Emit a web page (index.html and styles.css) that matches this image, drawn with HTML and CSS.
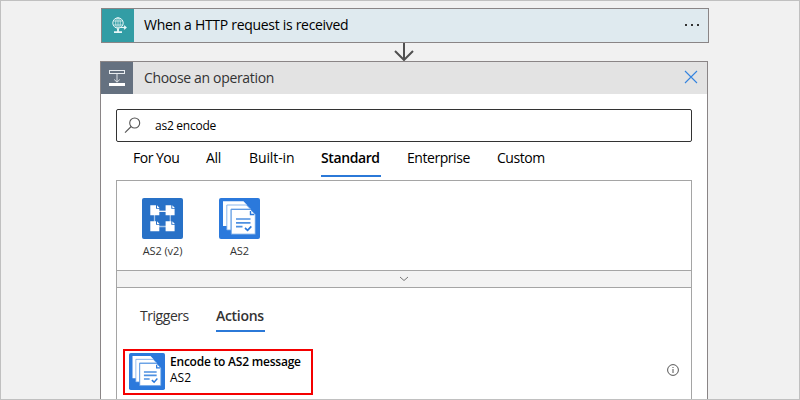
FILE: index.html
```html
<!DOCTYPE html>
<html lang="en">
<head>
<meta charset="utf-8">
<title>Choose an operation</title>
<link rel="stylesheet" href="styles.css">
</head>
<body>
<svg class="defs" width="0" height="0" aria-hidden="true">
  <symbol id="as2" viewBox="0 0 41 41" preserveAspectRatio="none">
    <rect width="41" height="41" rx="2" fill="#2b79dc"/>
    <path d="M4 3.3H24.5L28 7H8V28H4Z" fill="#fff"/>
    <path d="M7.8 32V7H27.5L31.5 11H12V32Z" fill="#fff" stroke="#6da5e8" stroke-width=".8"/>
    <path d="M12.2 11.5H31.5L36.3 16.5V36.2H12.2Z" fill="#fff" stroke="#5796e2" stroke-width=".9"/>
    <path d="M31.5 13V16.5H35.3" fill="none" stroke="#2b79dc" stroke-width="1.4"/>
    <path d="M17 21H31.5M17 24.8H31.5M17 28.7H23.5" fill="none" stroke="#4d90e1" stroke-width="1.7"/>
    <path d="M26 30L28.6 32.3L32.3 28.3" fill="none" stroke="#2b79dc" stroke-width="1.7"/>
  </symbol>
</svg>
<main class="canvas">
  <section class="trigger">
    <div class="trigger-icon">
      <svg width="18" height="18" viewBox="0 0 18 18" fill="none" stroke="#e8f6f7">
        <circle cx="7" cy="6" r="5.2"/>
        <ellipse cx="7" cy="6" rx="2.3" ry="5.2" stroke-width=".7"/>
        <path d="M2.5 4H11.5M2.5 8H11.5M7 1V13" stroke-width=".7"/>
        <path d="M10 10.5H15M13 8.8L15 10.5L13 12.3" stroke-width="1.2"/>
        <path d="M7 12V15M3 15.2H11" stroke-width="1.8"/>
      </svg>
    </div>
    <span class="trigger-title">When a HTTP request is received</span>
    <span class="more"><i></i><i></i><i></i></span>
  </section>
  <svg class="arrow" width="22" height="18" viewBox="0 0 22 18" fill="none" stroke="#505050" stroke-width="2"><path d="M11 0V17M2 8L11 17L20 8"/></svg>
  <section class="panel">
    <header class="panel-head">
      <div class="panel-icon">
        <svg width="16" height="16" viewBox="0 0 16 16" fill="none" stroke="#e9edf1">
          <rect x=".5" y=".5" width="15" height="3"/>
          <path d="M8 4V12M5.2 9.5L8 12.2L10.8 9.5" stroke-width=".9"/>
          <rect y="13" width="16" height="3" fill="#fff" stroke="none"/>
        </svg>
      </div>
      <h1>Choose an operation</h1>
      <svg class="close" width="14" height="14" viewBox="0 0 14 14" fill="none" stroke="#3484df" stroke-width="1.1"><path d="M1 1L13 13M13 1L1 13"/></svg>
    </header>
    <div class="panel-body">
      <div class="search">
        <svg width="17" height="17" viewBox="0 0 17 17" fill="none" stroke="#555" stroke-width="1.1"><circle cx="10.7" cy="6" r="5"/><path d="M7.2 9.5L1 15.7"/></svg>
        <span>as2 encode</span>
      </div>
      <nav class="tabs">
        <span class="foryou">For You</span><span>All</span><span class="builtin">Built-in</span><span class="active">Standard</span><span class="enterprise">Enterprise</span><span class="custom">Custom</span>
      </nav>
      <div class="connectors">
        <div class="connector">
          <svg width="41" height="41" viewBox="0 0 41 41">
            <rect width="41" height="41" rx="2" fill="#2871c7"/>
            <path d="M12.5 13.3H28.3V28.5H12.5Z" fill="none" stroke="#a3c4e8" stroke-width="1.3"/>
            <path d="M13 13.3H28" stroke="#fff"/>
            <g fill="#fff"><path id="doc" d="M8.3 7.3H14V10.8H17.3V17.3H8.3Z"/><use href="#doc" x="15.3"/><use href="#doc" y="16"/><use href="#doc" x="15.3" y="16"/></g>
            <g fill="#fff"><path id="fold" d="M15 7.3L17.6 10H15Z"/><use href="#fold" x="15.3"/><use href="#fold" y="16"/><use href="#fold" x="15.3" y="16"/></g>
          </svg>
          <span>AS2 (v2)</span>
        </div>
        <div class="connector">
          <svg width="41" height="41"><use href="#as2"/></svg>
          <span class="as2-label">AS2</span>
        </div>
      </div>
      <div class="expander"><svg width="10" height="6" viewBox="0 0 10 6" fill="none" stroke="#777"><path d="M1 1L5 4.5L9 1"/></svg></div>
      <div class="results">
        <nav class="kinds"><span class="triggers">Triggers</span><span class="selected">Actions</span></nav>
        <div class="row">
          <div class="operation">
            <svg width="36" height="37"><use href="#as2"/></svg>
            <div class="operation-text"><b>Encode to AS2 message</b><span>AS2</span></div>
          </div>
          <svg class="info" width="12" height="12" viewBox="0 0 12 12" fill="none" stroke="#555"><circle cx="6" cy="6" r="5.4"/><path d="M6 5V9M6 3V4"/></svg>
        </div>
      </div>
    </div>
  </section>
</main>
</body>
</html>
```
FILE: styles.css
```css
* { box-sizing: border-box; }
body { margin: 0; font-family: "Open Sans", "Noto Sans", sans-serif; font-size: 13px; color: #111; }
svg { display: block; flex: none; }
.defs { position: absolute; }
.canvas { width: 800px; height: 400px; overflow: hidden; border: 1px solid #c0c0c0; background: #f1f1f1; padding: 7px 91px 0 99px; }
.trigger { display: flex; align-items: center; width: 608px; height: 35px; margin-left: 1px; border: 1px solid #8a8586; background: #dfeaef; }
.trigger-icon { width: 32px; height: 33px; background: #329da5; padding: 8px 0 0 9px; }
.trigger-title { margin: 0 0 2px 10px; font-size: 14px; color: #000; letter-spacing: -.3px; white-space: nowrap; }
.more { display: flex; gap: 4px; margin: 0 9px 2px auto; }
.more i { width: 2px; height: 2px; background: #333; }
.arrow { margin-left: 293px; }
.panel { width: 608px; height: 350px; border: 1px solid #8a8586; background: #fff; }
.panel-head { display: flex; align-items: center; height: 32px; background: #e3e3e3; }
.panel-icon { width: 32px; height: 32px; background: #657180; padding: 8px; }
h1 { margin: 0 0 1px 11px; font-size: 14px; font-weight: 400; color: #333; letter-spacing: -.33px; }
.close { margin: 0 9px 2px auto; }
.panel-body { padding: 15px 15px 0; }
.search { display: flex; align-items: center; height: 33px; border: 1px solid #333; border-radius: 2px; padding-left: 7px; }
.search span { margin-left: 14px; font-size: 12px; color: #000; letter-spacing: -.25px; }
.tabs { display: grid; grid-template-columns: 73px 43px 72px 86px 90px auto; justify-items: start; height: 38px; padding-left: 17px; font-size: 14px; color: #000; white-space: nowrap; letter-spacing: -.3px; }
.tabs span { height: 35px; line-height: 31px; }
.tabs .foryou { letter-spacing: -.5px; }
.tabs .builtin { letter-spacing: -.1px; }
.tabs .enterprise, .tabs .custom { letter-spacing: -.45px; }
.tabs .active { width: 60px; border-bottom: 2px solid #2b79d8; font-weight: 600; letter-spacing: -.4px; }
.connectors { display: flex; height: 91px; border: 1px solid #a5a5a5; padding: 17px 0 0 7px; }
.connector { width: 77px; display: flex; flex-direction: column; align-items: center; font-size: 11px; color: #333; letter-spacing: -.1px; }
.connector span { margin-top: 4px; line-height: 15px; }
.expander { height: 16px; background: #f3f3f3; border: solid #a5a5a5; border-width: 0 1px; display: flex; justify-content: center; align-items: center; }
.results { height: 130px; border: 1px solid #a5a5a5; }
.kinds { display: flex; gap: 26px; padding-left: 23px; height: 61px; font-size: 14px; line-height: 24px; padding-top: 16px; color: #333; letter-spacing: -.45px; }
.kinds span { width: 50px; height: 28px; white-space: nowrap; }
.kinds .selected { width: 49px; border-bottom: 2px solid #2b79d8; font-weight: 600; letter-spacing: -.3px; }
.row { display: flex; align-items: center; padding-left: 6px; }
.operation { display: flex; width: 190px; height: 46px; border: 2px solid #f40000; padding: 2px 4px; }
.operation-text { display: flex; flex-direction: column; margin-left: 5px; padding-top: 1px; font-size: 12px; line-height: 16px; color: #000; white-space: nowrap; }
.operation-text b { font-weight: 600; letter-spacing: -.22px; }
.info { margin: 0 12px 5px auto; }
```
